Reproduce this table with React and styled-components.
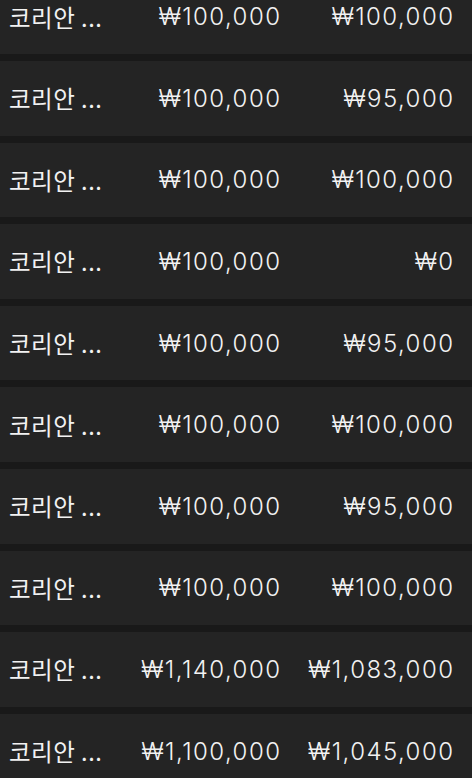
import React from 'react';
import styled, { createGlobalStyle } from 'styled-components';

const GlobalStyle = createGlobalStyle`
  html, body {
    margin: 0;
    padding: 0;
    background: #191919;
    overflow: hidden;
  }
  body {
    font-family: Inter, "Noto Sans CJK KR", sans-serif;
    -webkit-font-smoothing: antialiased;
  }
`;

const rows = [
  ['코리안 ...', '₩100,000', '₩100,000'],
  ['코리안 ...', '₩100,000', '₩95,000'],
  ['코리안 ...', '₩100,000', '₩100,000'],
  ['코리안 ...', '₩100,000', '₩0'],
  ['코리안 ...', '₩100,000', '₩95,000'],
  ['코리안 ...', '₩100,000', '₩100,000'],
  ['코리안 ...', '₩100,000', '₩95,000'],
  ['코리안 ...', '₩100,000', '₩100,000'],
  ['코리안 ...', '₩1,140,000', '₩1,083,000'],
  ['코리안 ...', '₩1,100,000', '₩1,045,000']
];

export default function App() {
  return (
    <>
      <GlobalStyle />
      <List>
        {rows.map((r, i) => (
          <Row key={i}>
            <Name>{r[0]}</Name>
            <Price>{r[1]}</Price>
            <Price>{r[2]}</Price>
          </Row>
        ))}
      </List>
    </>
  );
}

const List = styled.div`
  display: flex;
  flex-direction: column;
  gap: 7px;
  margin-top: -20.6px;
`;

const Row = styled.div`
  box-sizing: border-box;
  height: 74.6px;
  background: #242424;
  display: grid;
  grid-template-columns: 101px 170px 173px;
  align-items: center;
  padding: 0 19px 0 9px;
  color: #f2f2f2;
  font-size: 24px;
  font-weight: 350;
`;

const Name = styled.div`
  font-family: "Noto Sans CJK KR", sans-serif;
  font-weight: 400;
  font-size: 23.5px;
  letter-spacing: 0.5px;
  white-space: nowrap;
`;

const Price = styled.div`
  text-align: right;
  letter-spacing: 1.45px;
  margin-right: -1.45px;
  white-space: nowrap;
`;
